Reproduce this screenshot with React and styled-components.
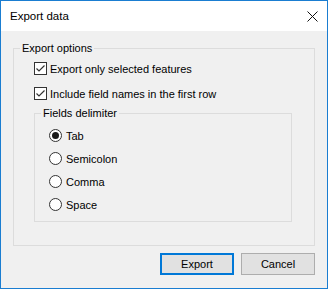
import styled, { createGlobalStyle } from "styled-components";

const GlobalStyle = createGlobalStyle`
    html, body {
        margin: 0;
        padding: 0;
        background: #ffffff;
    }
    * {
        box-sizing: border-box;
    }
`

const Window = styled.div`
    width: 328px;
    height: 289px;
    border: 1px solid #1a7dd1;
    background-color: #f0f0f0;
    display: flex;
    flex-direction: column;
    font-family: "Liberation Sans", Arial, sans-serif;
    font-size: 11px;
    color: #000;
`

const TitleBar = styled.div`
    height: 30px;
    background-color: #ffffff;
    display: flex;
    align-items: center;
    justify-content: space-between;
    padding: 0 9px 0 9px;
`

const Title = styled.span`
    font-size: 11.5px;
    color: #000;
`

const CloseIcon = styled.svg`
    display: block;
`

const Content = styled.div`
    flex: 1;
    display: flex;
    flex-direction: column;
    padding: 11px 12px 0 12px;
`

const Group = styled.fieldset`
    margin: ${props => props.$inner ? "-3px 22px 0 0" : "0"};
    min-width: 0;
    border: 1px solid #dcdcdc;
    padding: ${props => props.$inner ? "7px 0 8px 14px" : "5px 0 23px 20px"};
    display: flex;
    flex-direction: column;
    gap: ${props => props.$inner ? "6px" : "8px"};
`

const Legend = styled.legend`
    padding: 0 2px;
    margin-left: ${props => props.$inner ? "-8px" : "-14px"};
    line-height: 13px;
    font-size: 11px;
`

const Row = styled.label`
    height: 17px;
    display: flex;
    align-items: center;
    gap: ${props => props.$radio ? "4px" : "3px"};
    white-space: nowrap;
`

const Box = styled.span`
    width: 13px;
    height: 13px;
    flex: none;
    border: 1px solid #333333;
    background-color: #ffffff;
    display: flex;
    align-items: center;
    justify-content: center;
`

const Circle = styled.span`
    width: 13px;
    height: 13px;
    flex: none;
    border-radius: 50%;
    border: 1px solid #333333;
    background-color: #ffffff;
    display: flex;
    align-items: center;
    justify-content: center;
`

const Dot = styled.span`
    width: 7px;
    height: 7px;
    border-radius: 50%;
    background-color: #1a1a1a;
`

const Buttons = styled.div`
    display: flex;
    justify-content: flex-end;
    gap: 7px;
    margin-top: 7px;
`

const Button = styled.button`
    width: 74px;
    height: 22px;
    padding: 0;
    font-family: "Liberation Sans", Arial, sans-serif;
    font-size: 11px;
    color: #000;
    background-color: #e1e1e1;
    border: ${props => props.$default ? "2px solid #0078d7" : "1px solid #adadad"};
`

const CheckBox = ({ label }) => (
    <Row>
        <Box>
            <svg width="11" height="11" viewBox="0 0 11 11">
                <path d="M1.5 5.5 L4 8 L9.5 2.5" fill="none" stroke="#333" strokeWidth="1.2" />
            </svg>
        </Box>
        {label}
    </Row>
)

const Radio = ({ label, checked }) => (
    <Row $radio>
        <Circle>{checked && <Dot />}</Circle>
        {label}
    </Row>
)

const App = () => {
    const delimiters = ["Tab", "Semicolon", "Comma", "Space"]

    return (
        <Window>
            <GlobalStyle />
            <TitleBar>
                <Title>Export data</Title>
                <CloseIcon width="11" height="11" viewBox="0 0 11 11">
                    <path d="M0.5 0.5 L10.5 10.5 M10.5 0.5 L0.5 10.5" stroke="#111" strokeWidth="1" />
                </CloseIcon>
            </TitleBar>
            <Content>
                <Group>
                    <Legend>Export options</Legend>
                    <CheckBox label="Export only selected features" />
                    <CheckBox label="Include field names in the first row" />
                    <Group $inner>
                        <Legend $inner>Fields delimiter</Legend>
                        {delimiters.map((d, i) => (
                            <Radio key={d} label={d} checked={i === 0} />
                        ))}
                    </Group>
                </Group>
                <Buttons>
                    <Button $default>Export</Button>
                    <Button>Cancel</Button>
                </Buttons>
            </Content>
        </Window>
    )
}

export default App
